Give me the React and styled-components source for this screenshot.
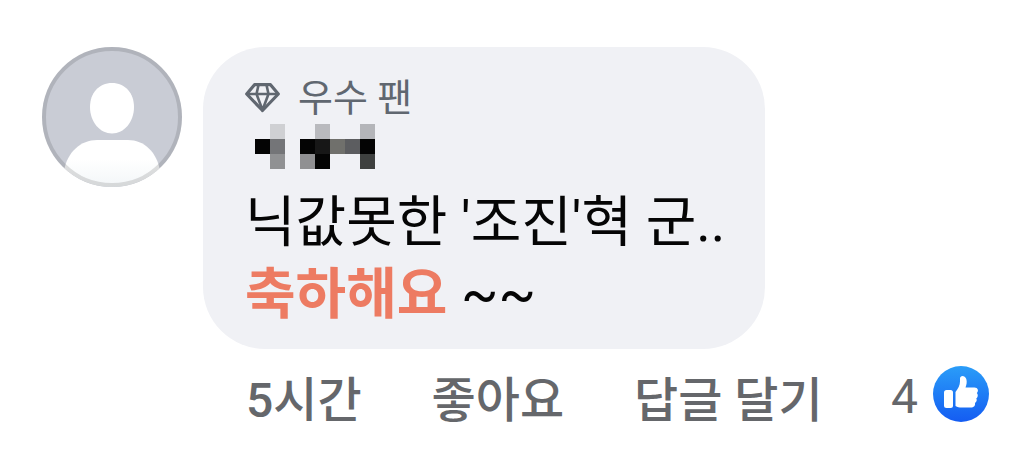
import React from 'react'
import styled, { createGlobalStyle } from 'styled-components'

const GlobalStyle = createGlobalStyle`
  * {
    box-sizing: border-box;
  }
  body {
    margin: 0;
    background: #ffffff;
    font-family: Roboto, "Noto Sans CJK KR", sans-serif;
  }
`;

const nameCells = [
  ['', '#cfd0d3', '', '', '#b9babe', '', '', '#b4b5b9'],
  ['#040404', '#747578', '', '#040404', '#171717', '#70706c', '#5c5d60', '#040404'],
  ['', '#909193', '', '#909092', '#040404', '', '', '#3e403f'],
]

const Avatar = () => (
  <AvatarLink href="#profile" aria-label="프로필">
    <svg viewBox="0 0 140 140" width="140" height="140">
      <defs>
        <clipPath id="avatarClip">
          <circle cx="70" cy="70" r="70" />
        </clipPath>
        <linearGradient id="body" x1="0" y1="0" x2="0" y2="1">
          <stop offset="0.4" stopColor="#ffffff" />
          <stop offset="1" stopColor="#f3f6f8" />
        </linearGradient>
      </defs>
      <g clipPath="url(#avatarClip)">
        <rect width="140" height="140" fill="#c9ccd5" />
        <path d="M70 36C83 36 92 46 92 60C92 75 82 86.500 70 86.500S48 75 48 60C48 46 57 36 70 36Z" fill="#ffffff" />
        <path d="M22 124C25 105 39 93 55 93H86C102 93 115 105 118 124V140H22Z" fill="url(#body)" />
      </g>
      <circle cx="70" cy="70" r="68" fill="none" stroke="#000000" strokeOpacity="0.12" strokeWidth="4" />
    </svg>
  </AvatarLink>
)

const Gem = () => (
  <svg viewBox="0 0 36 30" width="36" height="30" fill="none" stroke="#606770" strokeWidth="3.200" strokeLinejoin="round">
    <path d="M9.500 1.700H25.500L33.300 11L17.500 27.500L1.700 11Z" />
    <path d="M2 11H33M13.500 2L11.500 11L17.500 27L23.500 11L21.500 2" strokeWidth="2.600" />
  </svg>
)

const LikeIcon = () => (
  <svg viewBox="0 0 56 56" width="56" height="56">
    <defs>
      <linearGradient id="like" x1="0" y1="0" x2="0" y2="1">
        <stop offset="0" stopColor="#2a9df8" />
        <stop offset="1" stopColor="#145cf2" />
      </linearGradient>
    </defs>
    <circle cx="28" cy="28" r="28" fill="url(#like)" />
    <rect x="11" y="24" width="9" height="18" rx="2.500" fill="#ffffff" />
    <path d="M22.500 26C25 22.500 27 19.500 27 15.500V12.500C27 9 32 9 33.300 13C34.200 16 33.500 19 32.500 21.500H41.500C45 21.500 46 25 43.800 27C45.500 29 44.800 31.500 43.300 32.300C44.300 34.300 43.500 36 42 37C42.500 40 40.500 41.500 38 41.500H29C26 41.500 24.500 41 22.500 40Z" fill="#ffffff" />
  </svg>
)

export default function App() {
  return (
    <>
      <GlobalStyle />
      <Comment>
        <Avatar />
        <Content>
          <Bubble>
            <Badge>
              <Gem />
              <span>우수 팬</span>
            </Badge>
            <HiddenName role="img" aria-label="가려진 이름">
              {nameCells.flat().map((color, i) => (
                <Cell key={i} $color={color} />
              ))}
            </HiddenName>
            <Text>
              닉값못한 '조진'혁 군..
              <br />
              <Highlight>축하해요</Highlight> ~~
            </Text>
          </Bubble>
          <Footer>
            <Actions>
              <TimeLink href="#comment">5시간</TimeLink>
              <Action type="button">좋아요</Action>
              <Action type="button">답글 달기</Action>
            </Actions>
            <Likes type="button">
              <Count>4</Count>
              <LikeIcon />
            </Likes>
          </Footer>
        </Content>
      </Comment>
    </>
  )
}

const Comment = styled.article`
  display: flex;
  align-items: flex-start;
  gap: 21px;
  padding: 47px 29px 24px 42px;
`;

const AvatarLink = styled.a`
  flex: none;
  svg {
    display: block;
  }
`;

const Content = styled.div`
  flex: 1;
  min-width: 0;
`;

const Bubble = styled.div`
  width: fit-content;
  padding: 28px 40px 19px 42px;
  border-radius: 62px;
  background: #f0f1f5;
`;

const Badge = styled.div`
  display: flex;
  align-items: center;
  gap: 17px;
  color: #606770;
  font-size: 38px;
  line-height: 46px;
`;

const HiddenName = styled.div`
  display: grid;
  grid-template-columns: repeat(8, 15px);
  grid-auto-rows: 15px;
  margin: 3px 10px 17px;
`;

const Cell = styled.span`
  background: ${props => props.$color || 'transparent'};
`;

const Text = styled.p`
  margin: 0;
  color: #050505;
  font-size: 55px;
  line-height: 72px;
`;

const Highlight = styled.strong`
  color: #ed7b62;
  font-weight: 700;
`;

const Footer = styled.div`
  display: flex;
  align-items: center;
  justify-content: space-between;
  padding: 10px 0 0 43px;
  color: #65676b;
`;

const Actions = styled.div`
  display: flex;
  gap: 70px;
  padding-top: 14px;
`;

const Action = styled.button`
  padding: 0;
  border: none;
  background: none;
  color: #65676b;
  font-family: inherit;
  font-size: 48px;
  font-weight: 500;
  line-height: 56px;
  white-space: nowrap;
  cursor: pointer;
`;

const TimeLink = styled(Action).attrs({ as: 'a' })`
  text-decoration: none;
`;

const Likes = styled(Action)`
  display: flex;
  align-items: center;
  gap: 15px;
  font-weight: 400;
`;

const Count = styled.span`
  padding-top: 6px;
`;
